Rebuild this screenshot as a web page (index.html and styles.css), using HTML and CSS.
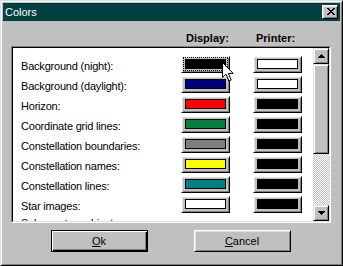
FILE: index.html
```html
<!DOCTYPE html>
<html lang="en">
  <head>
    <meta charset="utf-8">
    <title>Colors</title>
    <link rel="stylesheet" href="styles.css">
  </head>
  <body>
    <div class="window">
      <div class="titlebar">
        <span class="title">Colors</span>
        <button class="close">
          <svg width="8" height="7" viewBox="0 0 8 7" shape-rendering="crispEdges">
            <path d="M0 0h2v1h-2zM6 0h2v1h-2zM1 1h2v1h-2zM5 1h2v1h-2zM2 2h4v1h-4zM3 3h2v1h-2zM2 4h4v1h-4zM1 5h2v1h-2zM5 5h2v1h-2zM0 6h2v1h-2zM6 6h2v1h-2z" fill="#000"/>
          </svg>
        </button>
      </div>

      <div class="content">
        <div class="header">
          <span class="col-head">Display:</span>
          <span class="col-head">Printer:</span>
        </div>

        <div class="list-frame">
          <div class="list">
            <div class="rows">
              <div class="row">
                <span class="label">Background (night):</span>
                <button class="swatch-btn focused"><span class="swatch black"></span></button>
                <button class="swatch-btn"><span class="swatch white"></span></button>
              </div>
              <div class="row">
                <span class="label">Background (daylight):</span>
                <button class="swatch-btn"><span class="swatch navy"></span></button>
                <button class="swatch-btn"><span class="swatch white"></span></button>
              </div>
              <div class="row">
                <span class="label">Horizon:</span>
                <button class="swatch-btn"><span class="swatch red"></span></button>
                <button class="swatch-btn"><span class="swatch black"></span></button>
              </div>
              <div class="row">
                <span class="label">Coordinate grid lines:</span>
                <button class="swatch-btn"><span class="swatch green"></span></button>
                <button class="swatch-btn"><span class="swatch black"></span></button>
              </div>
              <div class="row">
                <span class="label">Constellation boundaries:</span>
                <button class="swatch-btn"><span class="swatch gray"></span></button>
                <button class="swatch-btn"><span class="swatch black"></span></button>
              </div>
              <div class="row">
                <span class="label">Constellation names:</span>
                <button class="swatch-btn"><span class="swatch yellow"></span></button>
                <button class="swatch-btn"><span class="swatch black"></span></button>
              </div>
              <div class="row">
                <span class="label">Constellation lines:</span>
                <button class="swatch-btn"><span class="swatch teal"></span></button>
                <button class="swatch-btn"><span class="swatch black"></span></button>
              </div>
              <div class="row">
                <span class="label">Star images:</span>
                <button class="swatch-btn"><span class="swatch white"></span></button>
                <button class="swatch-btn"><span class="swatch black"></span></button>
              </div>
              <div class="row row-partial">
                <span class="label">Solar system objects:</span>
              </div>
            </div>

            <div class="scrollbar">
              <div class="sb-btn">
                <svg width="7" height="4" viewBox="0 0 7 4" shape-rendering="crispEdges">
                  <path d="M3 0h1v1h-1zM2 1h3v1h-3zM1 2h5v1h-5zM0 3h7v1h-7z" fill="#000"/>
                </svg>
              </div>
              <div class="sb-thumb"></div>
              <div class="sb-track"></div>
              <div class="sb-btn">
                <svg width="7" height="4" viewBox="0 0 7 4" shape-rendering="crispEdges">
                  <path d="M0 0h7v1h-7zM1 1h5v1h-5zM2 2h3v1h-3zM3 3h1v1h-1z" fill="#000"/>
                </svg>
              </div>
            </div>
          </div>
        </div>

        <div class="actions">
          <button class="push default"><u>O</u>k</button>
          <button class="push"><u>C</u>ancel</button>
        </div>
      </div>

      <!-- mouse pointer sitting over the first swatch -->
      <svg class="cursor" width="12" height="20" viewBox="0 0 12 20">
        <path d="M0.5 0.5V15.5L4 12.2L7 19L9.2 18L6.4 11.4H11.2Z" fill="#fff" stroke="#000" stroke-width="1" stroke-linejoin="miter"/>
      </svg>
    </div>
  </body>
</html>
```

FILE: styles.css
```css
body {
  margin: 0;
  background: #c0c0c0;
  font-family: "Liberation Sans", Arial, sans-serif;
  font-size: 11px;
  color: #000;
}

button {
  font: inherit;
  color: inherit;
  margin: 0;
  padding: 0;
}

.window {
  position: relative;
  box-sizing: border-box;
  width: 343px;
  height: 266px;
  padding: 2px;
  background: #c0c0c0;
  border: 1px solid;
  border-color: #dfdfdf #000 #000 #dfdfdf;
  box-shadow: inset 1px 1px #fff, inset -1px -1px #808080;
  display: flex;
  flex-direction: column;
}

/* title bar */
.titlebar {
  height: 18px;
  background: #004040;
  display: flex;
  align-items: flex-start;
  justify-content: space-between;
}

.title {
  color: #fff;
  line-height: 18px;
  padding-left: 2px;
}

.close {
  box-sizing: border-box;
  width: 16px;
  height: 14px;
  margin: 2px 2px 0 0;
  background: #c0c0c0;
  border: 1px solid;
  border-color: #fff #000 #000 #fff;
  box-shadow: inset 1px 1px #dfdfdf, inset -1px -1px #808080;
  display: flex;
  padding: 2px 0 0 4px;
}

/* dialog body */
.content {
  flex: 1;
  padding: 0 9px 0 8px;
  display: flex;
  flex-direction: column;
}

.header {
  box-sizing: border-box;
  height: 25px;
  padding: 11px 0 0 175px;
  display: flex;
}

.col-head {
  width: 70px;
  font-weight: bold;
  line-height: 13px;
}

.list-frame {
  height: 177px;
  box-sizing: border-box;
  border: 1px solid;
  border-color: #808080 #fff #fff #808080;
}

.list {
  height: 100%;
  box-sizing: border-box;
  border: 1px solid;
  border-color: #000 #dfdfdf #dfdfdf #000;
  background: #fff;
  display: flex;
}

.rows {
  flex: 1;
  min-width: 0;
  overflow: hidden;
  padding: 8px 0 0 8px;
}

.row {
  height: 20px;
  display: flex;
  align-items: flex-start;
}

.row-partial {
  margin-top: -3px;
}

.label {
  flex: none;
  width: 160px;
  padding-top: 2px;
  line-height: 17px;
  letter-spacing: -0.2px;
  white-space: nowrap;
}

.swatch-btn {
  flex: none;
  box-sizing: border-box;
  width: 49px;
  height: 17px;
  padding: 2px 3px 3px 3px;
  background: #c0c0c0;
  border: 1px solid;
  border-color: #fff #000 #000 #fff;
  box-shadow: inset 1px 1px #dfdfdf, inset -1px -1px #808080;
  display: flex;
}

.swatch-btn + .swatch-btn {
  margin-left: 23px;
}

.swatch {
  flex: 1;
  border: 1px solid #000;
}

.focused .swatch {
  outline: 1px dotted #000;
  outline-offset: 1px;
}

.black { background: #000; }
.white { background: #fff; }
.navy { background: #000080; }
.red { background: #ff0000; }
.green { background: #008040; }
.gray { background: #808080; }
.yellow { background: #ffff00; }
.teal { background: #008080; }

/* scrollbar */
.scrollbar {
  flex: none;
  width: 16px;
  display: flex;
  flex-direction: column;
}

.sb-btn,
.sb-thumb {
  box-sizing: border-box;
  background: #c0c0c0;
  border: 1px solid;
  border-color: #dfdfdf #000 #000 #dfdfdf;
  box-shadow: inset 1px 1px #fff, inset -1px -1px #808080;
}

.sb-btn {
  height: 16px;
  display: flex;
  align-items: center;
  justify-content: center;
}

.sb-thumb {
  height: 90px;
}

.sb-track {
  flex: 1;
  background: repeating-conic-gradient(#fff 0 25%, #c0c0c0 0 50%) 0 0 / 2px 2px;
}

/* ok / cancel */
.actions {
  margin-top: 7px;
  display: flex;
  justify-content: center;
  gap: 46px;
  padding-right: 1px;
}

.push {
  box-sizing: border-box;
  width: 97px;
  height: 22px;
  background: #c0c0c0;
  border: 1px solid;
  border-color: #fff #000 #000 #fff;
  box-shadow: inset 1px 1px #dfdfdf, inset -1px -1px #808080;
}

.push.default {
  border-color: #000;
  box-shadow: inset 1px 1px #fff, inset -1px -1px #000, inset -2px -2px #808080;
}

.cursor {
  position: absolute;
  left: 221px;
  top: 61px;
}
```
